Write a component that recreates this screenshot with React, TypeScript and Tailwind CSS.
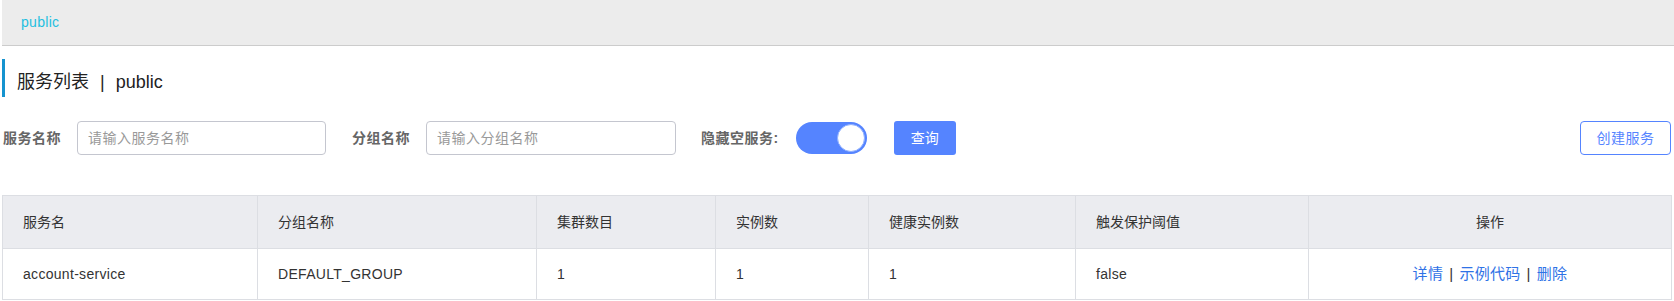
import React, { useState } from 'react';

const font = { fontFamily: '"Liberation Sans", "Noto Sans CJK SC", sans-serif' };

interface ServiceRow {
    name: string;
    group: string;
    clusters: number;
    instances: number;
    healthy: number;
    threshold: string;
}

const rows: ServiceRow[] = [
    { name: 'account-service', group: 'DEFAULT_GROUP', clusters: 1, instances: 1, healthy: 1, threshold: 'false' },
];

const columns = [
    { title: '服务名', width: 'w-[255px]' },
    { title: '分组名称', width: 'w-[279px]' },
    { title: '集群数目', width: 'w-[179px]' },
    { title: '实例数', width: 'w-[153px]' },
    { title: '健康实例数', width: 'w-[207px]' },
    { title: '触发保护阈值', width: 'w-[233px]' },
    { title: '操作', width: '' },
];

export default function App() {
    const [serviceName, setServiceName] = useState('');
    const [groupName, setGroupName] = useState('');
    const [hideEmpty, setHideEmpty] = useState(true);

    return (
        <div className="min-h-screen bg-white pl-[2px] text-[#333]" style={font}>
            {/* breadcrumb bar */}
            <div className="h-[46px] bg-[#ececec] border-b border-[#cccccc] flex items-center pl-[19px]">
                <span className="text-[14px] text-[#1fbfe0] tracking-[0.3px]">public</span>
            </div>

            <div className="pr-[2px]">
                {/* title */}
                <div className="mt-[13px] h-[38px] border-l-[3px] border-[#1593cf] flex items-center pl-[12px] pt-[9px]">
                    <span className="text-[18px] text-[#222]">服务列表</span>
                    <span className="text-[18px] text-[#222] mx-[11px]">|</span>
                    <span className="text-[18px] text-[#222]">public</span>
                </div>

                {/* filters */}
                <div className="mt-[24px] flex items-center h-[34px]">
                    <label className="pl-[1px] text-[14px] font-bold text-[#666] tracking-[0.5px]">服务名称</label>
                    <input
                        value={serviceName}
                        onChange={e => setServiceName(e.target.value)}
                        placeholder="请输入服务名称"
                        className="ml-[16px] w-[249px] h-[34px] border border-[#c4c6cf] rounded-[4px] px-[10px] text-[14px] tracking-[0.5px] placeholder:text-[#999] outline-none"
                    />
                    <label className="ml-[26px] text-[14px] font-bold text-[#666] tracking-[0.5px]">分组名称</label>
                    <input
                        value={groupName}
                        onChange={e => setGroupName(e.target.value)}
                        placeholder="请输入分组名称"
                        className="ml-[16px] w-[250px] h-[34px] border border-[#c4c6cf] rounded-[4px] px-[10px] text-[14px] tracking-[0.5px] placeholder:text-[#999] outline-none"
                    />
                    <label className="ml-[25px] text-[14px] font-bold text-[#666] tracking-[0.5px]">隐藏空服务:</label>
                    <button
                        onClick={() => setHideEmpty(!hideEmpty)}
                        className={`ml-[17px] w-[71px] h-[32px] rounded-full flex items-center px-[2px] ${hideEmpty ? 'bg-[#5584ff] justify-end' : 'bg-[#e6e7eb] justify-start'}`}
                    >
                        <span className="w-[28px] h-[28px] rounded-full bg-white border border-[#8fb0ff]" />
                    </button>
                    <button className="ml-[27px] w-[62px] h-[34px] rounded-[3px] bg-[#5584ff] text-white text-[14px]">查询</button>
                    <div className="flex-1" />
                    <button className="w-[91px] h-[34px] rounded-[4px] border border-[#5584ff] text-[#5584ff] text-[14px] tracking-[0.5px] bg-white mr-[1px]">创建服务</button>
                </div>

                {/* table */}
                <table className="mt-[40px] w-full border-collapse border border-[#dcdee3] text-[14px]">
                    <thead>
                        <tr className="bg-[#ebecf0] h-[53px]">
                            {columns.map((c, i) => (
                                <th
                                    key={c.title}
                                    className={`${c.width} border border-[#dcdee3] font-normal text-[#333] ${i === 6 ? 'text-center' : 'text-left pl-[20px]'}`}
                                >
                                    {c.title}
                                </th>
                            ))}
                        </tr>
                    </thead>
                    <tbody>
                        {rows.map(r => (
                            <tr key={r.name} className="h-[51px] tracking-[0.3px]">
                                <td className="border border-[#dcdee3] pl-[20px]">{r.name}</td>
                                <td className="border border-[#dcdee3] pl-[20px]">{r.group}</td>
                                <td className="border border-[#dcdee3] pl-[20px]">{r.clusters}</td>
                                <td className="border border-[#dcdee3] pl-[20px]">{r.instances}</td>
                                <td className="border border-[#dcdee3] pl-[20px]">{r.healthy}</td>
                                <td className="border border-[#dcdee3] pl-[20px]">{r.threshold}</td>
                                <td className="border border-[#dcdee3] text-center text-[15px]">
                                    <a className="text-[#2f72e6] cursor-pointer">详情</a>
                                    <span className="mx-[6px] text-[#333]">|</span>
                                    <a className="text-[#2f72e6] cursor-pointer">示例代码</a>
                                    <span className="mx-[6px] text-[#333]">|</span>
                                    <a className="text-[#2f72e6] cursor-pointer">删除</a>
                                </td>
                            </tr>
                        ))}
                    </tbody>
                </table>
            </div>
        </div>
    );
}
